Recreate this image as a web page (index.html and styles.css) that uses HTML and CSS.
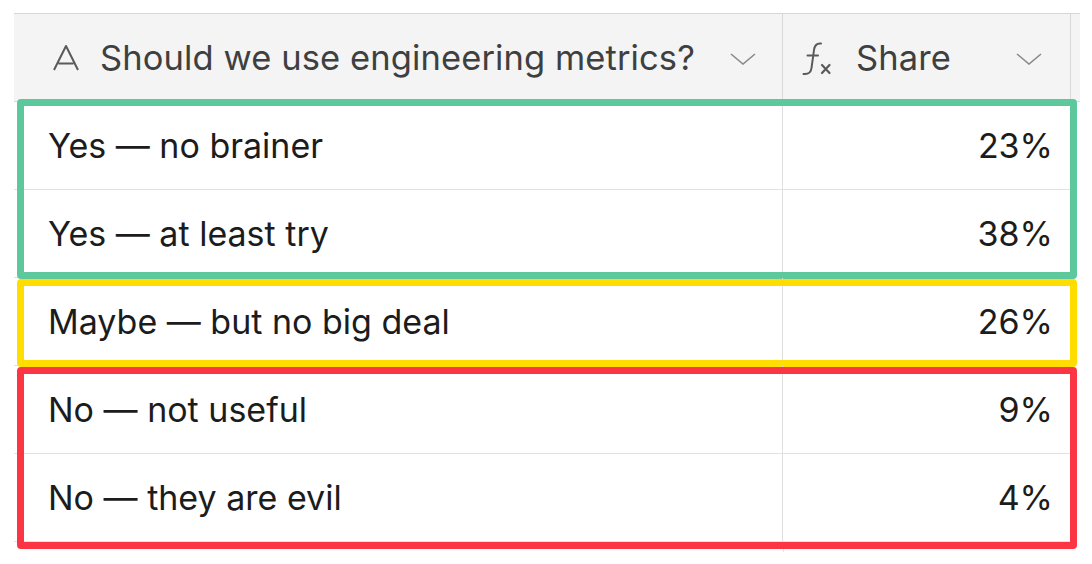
FILE: index.html
```html
<!DOCTYPE html>
<html>
<head>
<meta charset="utf-8">
<link rel="stylesheet" href="styles.css">
</head>
<body>
<div class="sheet">
  <div class="head">
    <div class="hcell c1">
      <svg class="ico-a" width="28" height="28" viewBox="0 0 28 28"><path d="M2 26 L14 2 L26 26 M6.5 19.5 H21.5" fill="none" stroke="#5a5a5a" stroke-width="2" stroke-linejoin="round"/></svg>
      <span class="htext">Should we use engineering metrics?</span>
      <svg class="chev" width="26" height="12" viewBox="0 0 26 12"><path d="M1 1 L13 11 L25 1" fill="none" stroke="#8a8a8a" stroke-width="1.6"/></svg>
    </div>
    <div class="hcell c2">
      <svg class="ico-fx" width="34" height="34" viewBox="0 0 34 34"><path d="M19 1.5 C14 1 12.5 4 12 8 L9.5 26 C9 30.5 6.5 32.5 1.5 32 M5.5 13.5 H16" fill="none" stroke="#5a5a5a" stroke-width="2" stroke-linecap="round"/><path d="M20 23 L27.5 31 M27.5 23 L20 31" fill="none" stroke="#5a5a5a" stroke-width="2.2" stroke-linecap="round"/></svg>
      <span class="htext">Share</span>
      <svg class="chev" width="26" height="12" viewBox="0 0 26 12"><path d="M1 1 L13 11 L25 1" fill="none" stroke="#8a8a8a" stroke-width="1.6"/></svg>
    </div>
    <div class="hcell c3"></div>
  </div>

  <div class="group green">
    <div class="row"><div class="cell c1">Yes — no brainer</div><div class="cell c2 num">23%</div></div>
    <div class="row"><div class="cell c1">Yes — at least try</div><div class="cell c2 num">38%</div></div>
  </div>
  <div class="group yellow">
    <div class="row"><div class="cell c1">Maybe — but no big deal</div><div class="cell c2 num">26%</div></div>
  </div>
  <div class="group red">
    <div class="row"><div class="cell c1">No — not useful</div><div class="cell c2 num">9%</div></div>
    <div class="row"><div class="cell c1">No — they are evil</div><div class="cell c2 num">4%</div></div>
  </div>
  <div class="foot"></div>
</div>
</body>
</html>
```

FILE: styles.css
```css
html, body {
  margin: 0;
  padding: 0;
  background: #ffffff;
}
body {
  font-family: "Inter", "Liberation Sans", Arial, sans-serif;
  min-height: 564px;
}
.sheet {
  margin: 13px 0 0 14px;
  width: 1066px;
  padding-bottom: 10px;
}
.head {
  display: flex;
  height: 87px;
  border-top: 1px solid #d7d7d7;
  border-bottom: 1px solid #dcdcdc;
  background: #f4f4f4;
  width: 1066px;
}
.hcell {
  display: flex;
  align-items: center;
  box-sizing: border-box;
  color: #3f3f3f;
  font-size: 34.5px;
  letter-spacing: 0.1px;
}
.hcell.c1 {
  width: 769px;
  border-right: 1px solid #d9d9d9;
  padding: 0 26px 0 38px;
}
.hcell.c2 {
  width: 288px;
  border-right: 1px solid #d9d9d9;
  padding: 0 28px 0 19px;
}
.hcell.c3 {
  width: 9px;
}
.ico-a {
  margin-right: 20px;
  flex: none;
}
.ico-fx {
  margin-right: 20px;
  flex: none;
  margin-top: 2px;
}
.htext {
  flex: 1;
  white-space: nowrap;
}
.chev {
  flex: none;
  margin-top: 2px;
}
.group {
  position: relative;
  width: 1056px;
}
.group::after {
  content: "";
  position: absolute;
  border: 7px solid;
  border-radius: 4px;
  pointer-events: none;
}
.green::after {
  border-color: #5dc89b;
  top: -3px;
  bottom: -1px;
  left: 3px;
  right: -7px;
}
.yellow::after {
  border-color: #ffdd00;
  top: 1px;
  bottom: -1px;
  left: 3px;
  right: -7px;
}
.red::after {
  border-color: #fb3543;
  top: 1px;
  bottom: -7px;
  left: 3px;
  right: -7px;
}
.row {
  display: flex;
  height: 87px;
  border-bottom: 1px solid #e2e2e2;
}
.cell {
  display: flex;
  align-items: center;
  box-sizing: border-box;
  font-size: 34px;
  color: #1c1c1c;
  white-space: nowrap;
}
.cell.c1 {
  width: 769px;
  border-right: 1px solid #dedede;
  padding-left: 34px;
}
.cell.c2 {
  width: 287px;
  justify-content: flex-end;
  padding-right: 17px;
}
.foot {
  width: 769px;
  height: 10px;
  border-right: 1px solid #e6e6e6;
}
```
